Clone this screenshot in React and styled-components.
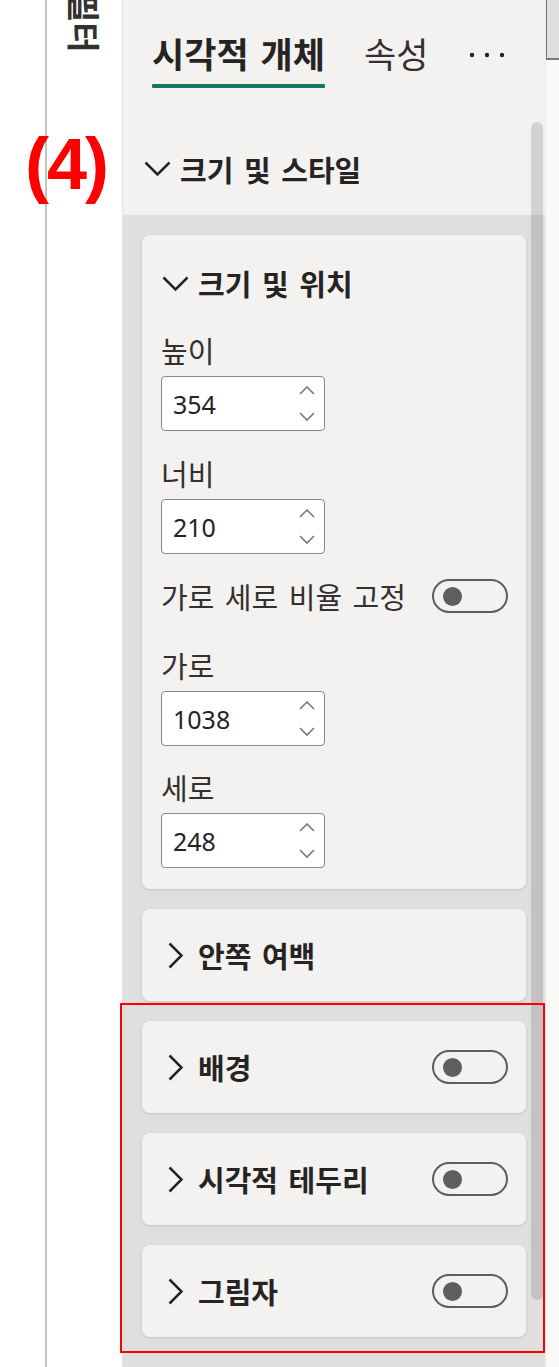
import React from "react"
import styled, { createGlobalStyle } from "styled-components"

const GlobalStyle = createGlobalStyle`
  html, body {
    margin: 0;
    padding: 0;
    background: #ffffff;
  }
  body {
    font-family: "Noto Sans", "Noto Sans CJK KR", sans-serif;
    color: #252423;
  }
`

const Page = styled.div`
  position: relative;
  display: flex;
  width: 559px;
  height: 1367px;
  overflow: hidden;
  background: #ffffff;
`

const Gutter = styled.div`
  width: 45px;
  flex-shrink: 0;
  background: #ffffff;
`

const Divider = styled.div`
  width: 2px;
  flex-shrink: 0;
  background: #c2c2c2;
`

const Rail = styled.div`
  width: 75px;
  flex-shrink: 0;
  background: #ffffff;
  border-right: 1px solid #e4e3e2;
  overflow: hidden;
  display: flex;
  justify-content: center;
`

const RailLabel = styled.div`
  writing-mode: vertical-rl;
  text-orientation: sideways;
  margin-top: -8px;
  font-family: "Noto Sans CJK KR", sans-serif;
  font-weight: 700;
  font-size: 33px;
  line-height: 1;
  color: #323130;
  height: 70px;
`

const Pane = styled.div`
  position: relative;
  width: 422px;
  flex-shrink: 0;
  display: flex;
  flex-direction: column;
  background: #f3f2f1;
`

const Tabs = styled.div`
  display: flex;
  align-items: flex-start;
  flex-shrink: 0;
  height: 122px;
  padding: 0 40px 0 29px;
`

const Tab = styled.div`
  display: flex;
  flex-direction: column;
  padding-top: 32px;
  margin-right: 39px;
  font-family: "Noto Sans CJK KR", sans-serif;
  font-size: 35px;
  line-height: 42px;
  word-spacing: 4px;
  font-weight: ${(p) => (p.active ? 700 : 400)};
  color: ${(p) => (p.active ? "#252423" : "#323130")};

  &::after {
    content: "";
    display: block;
    height: 4px;
    margin-top: 10px;
    border-radius: 1px;
    background: ${(p) => (p.active ? "#117865" : "transparent")};
  }
`

const More = styled.div`
  margin-left: auto;
  padding-top: 52px;
  display: flex;
`

const SectionHeader = styled.div`
  display: flex;
  align-items: center;
  flex-shrink: 0;
  gap: 9px;
  height: 93px;
  padding-left: 20px;
  font-family: "Noto Sans CJK KR", sans-serif;
  font-size: 29px;
  word-spacing: 4px;
  font-weight: 700;
  color: #252423;
`

const Body = styled.div`
  flex: 1;
  display: flex;
  flex-direction: column;
  gap: 20px;
  padding: 20px 19px;
  background: #e1dfdd;
`

const Card = styled.div`
  flex-shrink: 0;
  background: #f3f2f1;
  border-radius: 8px;
  box-shadow: 0 1px 3px rgba(0, 0, 0, 0.13);
`

const OpenCard = styled(Card)`
  display: flex;
  flex-direction: column;
  padding: 0 18px 21px 19px;
`

const CardHeader = styled.div`
  display: flex;
  align-items: center;
  gap: 9px;
  height: ${(p) => p.height || 96}px;
  font-family: "Noto Sans CJK KR", sans-serif;
  font-size: 29px;
  word-spacing: 4px;
  font-weight: 700;
  color: #252423;
`

const CollapsedCard = styled(Card)`
  display: flex;
  align-items: center;
  justify-content: space-between;
  height: 92px;
  padding: 0 18px 0 19px;
`

const IconBox = styled.span`
  width: 28px;
  height: 28px;
  display: flex;
  align-items: center;
  justify-content: center;
  flex-shrink: 0;
`

const Field = styled.div`
  display: flex;
  flex-direction: column;
  margin-bottom: ${(p) => p.gap ?? 23}px;
`

const Label = styled.div`
  font-family: "Noto Sans CJK KR", sans-serif;
  font-size: 29px;
  line-height: 38px;
  word-spacing: 4px;
  color: #323130;
`

const Spin = styled.div`
  margin-top: 7px;
  width: 164px;
  height: 55px;
  box-sizing: border-box;
  display: flex;
  align-items: center;
  justify-content: space-between;
  padding: 0 9px 0 11px;
  background: #ffffff;
  border: 1px solid #8a8886;
  border-radius: 4px;
  font-family: "Noto Sans", sans-serif;
  font-size: 25px;
  color: #252423;
`

const ToggleRow = styled.div`
  display: flex;
  align-items: center;
  justify-content: space-between;
  height: 38px;
  margin-bottom: 31px;
`

const Toggle = styled.div`
  width: 76px;
  height: 34px;
  box-sizing: border-box;
  border: 2px solid #605e5c;
  border-radius: 17px;
  display: flex;
  align-items: center;
  padding-left: 9px;

  &::before {
    content: "";
    width: 19px;
    height: 19px;
    border-radius: 50%;
    background: #605e5c;
  }
`

const Thumb = styled.div`
  position: absolute;
  top: 122px;
  right: 2px;
  width: 12px;
  height: 1178px;
  border-radius: 6px;
  background: rgba(0, 0, 0, 0.13);
`

const OuterBar = styled.div`
  flex: 1;
  background: #faf9f8;
  border-left: 1px solid #edebe9;
`

const OuterThumb = styled.div`
  height: 58px;
  background: #dedede;
  border-left: 1px solid #7a7a7a;
  border-bottom: 2px solid #7a7a7a;
`

const Annotation = styled.div`
  position: absolute;
  left: 25px;
  top: 121px;
  font-family: "Liberation Sans", Arial, sans-serif;
  font-weight: 700;
  font-size: 72px;
  line-height: 1.2;
  letter-spacing: -2px;
  color: #ff0000;
`

const Highlight = styled.div`
  position: absolute;
  left: 120px;
  top: 1003px;
  width: 425px;
  height: 350px;
  box-sizing: border-box;
  border: 2px solid #ff0000;
  pointer-events: none;
`

const ChevronDown = () => (
  <svg width="27" height="15" viewBox="0 0 27 15">
    <polyline points="1.5,1.5 13.5,13.5 25.5,1.5" fill="none" stroke="#252423" strokeWidth="2.5" />
  </svg>
)

const ChevronRight = () => (
  <svg width="15" height="27" viewBox="0 0 15 27">
    <polyline points="1.5,1.5 13.5,13.5 1.5,25.5" fill="none" stroke="#252423" strokeWidth="2.5" />
  </svg>
)

const Spinner = () => (
  <svg width="16" height="36" viewBox="0 0 16 36">
    <polyline points="1,8 8,1 15,8" fill="none" stroke="#7a7876" strokeWidth="1.6" />
    <polyline points="1,27 8,34 15,27" fill="none" stroke="#7a7876" strokeWidth="1.6" />
  </svg>
)

const Dots = () => (
  <svg width="36" height="6" viewBox="0 0 36 6">
    <circle cx="3" cy="3" r="2.2" fill="#252423" />
    <circle cx="18" cy="3" r="2.2" fill="#252423" />
    <circle cx="33" cy="3" r="2.2" fill="#252423" />
  </svg>
)

const NumberField = ({ label, value, gap }) => (
  <Field gap={gap}>
    <Label>{label}</Label>
    <Spin>
      <span>{value}</span>
      <Spinner />
    </Spin>
  </Field>
)

const collapsed = [
  { title: "안쪽 여백", toggle: false },
  { title: "배경", toggle: true },
  { title: "시각적 테두리", toggle: true },
  { title: "그림자", toggle: true },
]

const App = () => {
  return (
    <>
      <GlobalStyle />
      <Page>
        <Gutter />
        <Divider />
        <Rail>
          <RailLabel>필터</RailLabel>
        </Rail>
        <Pane>
          <Tabs>
            <Tab active>시각적 개체</Tab>
            <Tab>속성</Tab>
            <More>
              <Dots />
            </More>
          </Tabs>
          <SectionHeader>
            <IconBox>
              <ChevronDown />
            </IconBox>
            크기 및 스타일
          </SectionHeader>
          <Body>
            <OpenCard>
              <CardHeader>
                <IconBox>
                  <ChevronDown />
                </IconBox>
                크기 및 위치
              </CardHeader>
              <NumberField label="높이" value="354" />
              <NumberField label="너비" value="210" />
              <ToggleRow>
                <Label>가로 세로 비율 고정</Label>
                <Toggle />
              </ToggleRow>
              <NumberField label="가로" value="1038" gap={22} />
              <NumberField label="세로" value="248" gap={0} />
            </OpenCard>
            {collapsed.map((c) => (
              <CollapsedCard key={c.title}>
                <CardHeader height={92}>
                  <IconBox>
                    <ChevronRight />
                  </IconBox>
                  {c.title}
                </CardHeader>
                {c.toggle && <Toggle />}
              </CollapsedCard>
            ))}
          </Body>
          <Thumb />
        </Pane>
        <OuterBar>
          <OuterThumb />
        </OuterBar>
        <Annotation>(4)</Annotation>
        <Highlight />
      </Page>
    </>
  )
}

export default App
